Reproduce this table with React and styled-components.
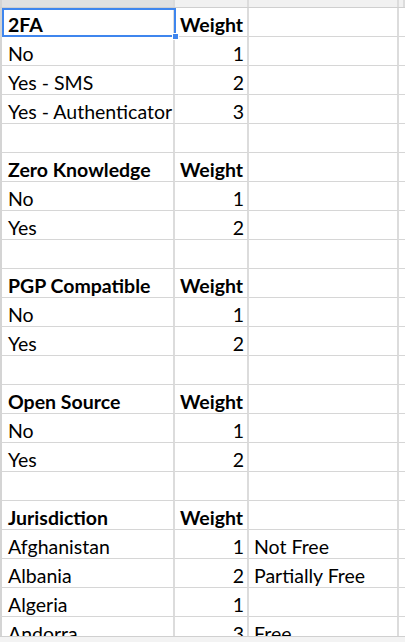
import React from 'react'
import styled, { createGlobalStyle } from 'styled-components'

const GlobalStyle = createGlobalStyle`
  html, body {
    margin: 0;
    padding: 0;
    background: #fff;
  }
  body {
    width: 405px;
    height: 642px;
    overflow: hidden;
    font-family: Lato, "Open Sans", sans-serif;
  }
`

const COLS = '175px 74px 150px 1fr'

const Sheet = styled.div`
  display: flex;
  flex-direction: column;
  width: 405px;
  height: 642px;
  overflow: hidden;
  position: relative;
`

const HeaderStrip = styled.div`
  display: grid;
  grid-template-columns: ${COLS};
  flex: none;
  border-bottom: 1px solid #cfcfcf;
  box-sizing: border-box;
  height: 8px;
`

const HeaderCell = styled.div`
  background: ${p => (p.$active ? '#e1e1e1' : '#f1f1f1')};
  border-right: 2px solid #dcdcdc;
  border-left: ${p => (p.$first ? '2px solid #d4d4d4' : 'none')};
`

const Body = styled.div`
  flex: 1;
  overflow: hidden;
  position: relative;
`

const Row = styled.div`
  display: grid;
  grid-template-columns: ${COLS};
  height: 29px;
  box-sizing: border-box;
`

const Cell = styled.div`
  display: flex;
  align-items: flex-end;
  justify-content: ${p => (p.$num ? 'flex-end' : 'flex-start')};
  box-sizing: border-box;
  height: 29px;
  border-bottom: 1px solid #d6d6d6;
  border-right: 2px solid #dcdcdc;
  border-left: ${p => (p.$first ? '2px solid #d4d4d4' : 'none')};
  padding: 0 ${p => (p.$num ? '3px' : '0')} 2px ${p => p.$pl || 6}px;
  font-size: 19.5px;
  line-height: 19px;
  font-weight: ${p => (p.$bold ? 700 : 400)};
  color: #000;
  white-space: nowrap;
  overflow: visible;
`

const Selection = styled.div`
  position: absolute;
  left: 2px;
  top: 0;
  width: 174px;
  height: 29px;
  box-sizing: border-box;
  border: 2px solid #3f86ee;
  pointer-events: none;
`

const Handle = styled.div`
  position: absolute;
  right: -5px;
  bottom: -5px;
  width: 7px;
  height: 7px;
  background: #3f86ee;
  border: 1px solid #fff;
  box-sizing: border-box;
`

const ScrollStrip = styled.div`
  flex: none;
  height: 6px;
  background: #f3f3f3;
  border-top: 1px solid #d0d0d0;
  box-sizing: border-box;
`

const rows = [
  ['2FA', 'Weight', '', true],
  ['No', 1],
  ['Yes - SMS', 2],
  ['Yes - Authenticator', 3],
  [],
  ['Zero Knowledge', 'Weight', '', true],
  ['No', 1],
  ['Yes', 2],
  [],
  ['PGP Compatible', 'Weight', '', true],
  ['No', 1],
  ['Yes', 2],
  [],
  ['Open Source', 'Weight', '', true],
  ['No', 1],
  ['Yes', 2],
  [],
  ['Jurisdiction', 'Weight', '', true],
  ['Afghanistan', 1, 'Not Free'],
  ['Albania', 2, 'Partially Free'],
  ['Algeria', 1, ''],
  ['Andorra', 3, 'Free'],
]

export default function App() {
  return (
    <>
      <GlobalStyle />
      <Sheet>
        <HeaderStrip>
          <HeaderCell $first $active />
          <HeaderCell />
          <HeaderCell />
          <HeaderCell />
        </HeaderStrip>
        <Body>
          {rows.map(([a = '', b = '', c = '', bold], i) => (
            <Row key={i}>
              <Cell $first $bold={bold} $pl={6}>{a}</Cell>
              <Cell $num={typeof b === 'number'} $bold={bold} $pl={typeof b === 'number' ? 0 : 5}>{b}</Cell>
              <Cell $pl={5}>{c}</Cell>
              <Cell />
            </Row>
          ))}
          <Selection>
            <Handle />
          </Selection>
        </Body>
        <ScrollStrip />
      </Sheet>
    </>
  )
}
